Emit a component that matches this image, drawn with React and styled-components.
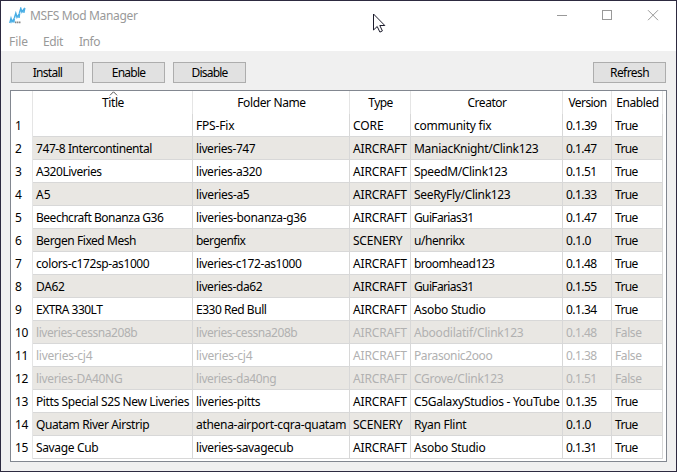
import React, { useLayoutEffect, useRef, useState } from 'react';
import styled, { createGlobalStyle } from 'styled-components';

const Global = createGlobalStyle`
  * { box-sizing: border-box; }
  body { margin: 0; background: #2d2a40; overflow: hidden; }
`;

const Desktop = styled.div`
  width: 677px;
  height: 472px;
  padding: 1px;
  background: #2d2a40;
`;
const Window = styled.main`
  position: relative;
  display: flex;
  flex-direction: column;
  width: 675px;
  height: 470px;
  background: #f0f0f0;
  color: #000;
  font: 12px/22px 'Noto Sans', 'Open Sans', sans-serif;
  white-space: nowrap;
`;
const TitleBar = styled.header`
  display: flex;
  height: 29px;
  background: #fff;
  color: #999;
`;
const AppIcon = styled.svg`
  width: 17px;
  height: 17px;
  margin: 6px 4px 0 8px;
`;
const WindowTitle = styled.h1`
  flex: 1;
  margin: 0;
  padding-top: 1px;
  font-size: 12px;
  line-height: 28px;
  font-weight: 400;
`;
const Controls = styled.svg`
  width: 138px;
  height: 29px;
`;
const MenuBar = styled.nav`
  display: flex;
  height: 21px;
  padding-left: 8px;
  background: #fff;
  color: #999;
  line-height: 23px;
`;
const MenuItem = styled.span`
  width: ${(p) => p.$width}px;
`;
const Toolbar = styled.div`
  display: flex;
  gap: 8px;
  height: 39px;
  padding: 11px 10px 0;
`;
const Button = styled.button`
  width: 73px;
  height: 21px;
  margin-left: ${(p) => (p.$end ? 'auto' : 0)};
  padding: 0;
  border: 1px solid #adadad;
  background: #e1e1e1;
  color: #000;
  font: inherit;
  line-height: 19px;
  text-align: center;
`;
const Label = styled.span`
  display: inline-block;
`;
const Table = styled.div`
  width: 657px;
  height: 372px;
  margin-left: 9px;
  border: 1px solid #828790;
  background: #fff;
`;
const Row = styled.div`
  display: grid;
  grid-template-columns: 22px 160px 157px 61px 152px 49px 51px;
  grid-template-rows: 23px;
  height: 23px;
  color: ${(p) => (p.$off ? '#b1b1b1' : '#000')};
`;
const HeadCell = styled.div`
  position: relative;
  padding-left: 1px;
  border-right: 1px solid #e5e5e5;
  text-align: center;
  line-height: 24px;
`;
const SortArrow = styled.svg`
  position: absolute;
  top: 0;
  left: 76px;
  width: 9px;
  height: 5px;
`;
const RowNumber = styled.div`
  padding-left: 4px;
  border-right: 1px solid #e5e5e5;
  color: #000;
  line-height: 24px;
  letter-spacing: -0.4px;
`;
const Cell = styled.div`
  padding-left: 3px;
  border-right: 1px solid #d8d8d8;
  border-bottom: 1px solid #d8d8d8;
  background: ${(p) => (p.$alt ? '#e9e7e3' : '#fff')};
  line-height: 24px;
`;
const Pointer = styled.svg`
  position: absolute;
  left: 372px;
  top: 12px;
  width: 13px;
  height: 21px;
`;

const labelWidths = {
  'MSFS Mod Manager': 107.5, File: 19, Edit: 20, Info: 21,
  Install: 29.5, Enable: 33.5, Disable: 36, Refresh: 39,
  Title: 22, 'Folder Name': 68.5, Type: 24.5, Creator: 39, Version: 38, Enabled: 42.5,
  '747-8 Intercontinental': 116, A320Liveries: 65.5, A5: 14.5,
  'Beechcraft Bonanza G36': 127.3, 'Bergen Fixed Mesh': 100,
  'colors-c172sp-as1000': 113.3, DA62: 28.5, 'EXTRA 330LT': 66.3,
  'liveries-cessna208b': 101.3, 'liveries-cj4': 56.3, 'liveries-DA40NG': 86.3,
  'Pitts Special S2S New Liveries': 153, 'Quatam River Airstrip': 113.3, 'Savage Cub': 62.3,
  'FPS-Fix': 38.3, 'liveries-747': 59.3, 'liveries-a320': 65.6, 'liveries-a5': 53.4,
  'liveries-bonanza-g36': 110.4, bergenfix: 49.3, 'liveries-c172-as1000': 105.4,
  'liveries-da62': 66.2, 'E330 Red Bull': 70.4, 'liveries-da40ng': 80.2,
  'liveries-pitts': 64.3, 'athena-airport-cqra-quatam': 150.2, 'liveries-savagecub': 97.2,
  CORE: 30.5, AIRCRAFT: 53.7, SCENERY: 49.3,
  'community fix': 77.4, 'ManiacKnight/Clink123': 124.4, 'SpeedM/Clink123': 93.3,
  'SeeRyFly/Clink123': 96.4, GuiFarias31: 59.5, 'u/henrikx': 50.4, broomhead123: 80.4,
  'Asobo Studio': 71.4, 'Aboodilatif/Clink123': 109.4, Parasonic2ooo: 78.3,
  'CGrove/Clink123': 89.4, 'C5GalaxyStudios - YouTube': 145.4, 'Ryan Flint': 52.4,
  '0.1.0': 25, True: 22.6, False: 26.6,
};
const versionWidth = 30.6;

/* Tracks a label so that it takes its nominal width whatever font is in use. */
function Text({ children }) {
  const ref = useRef(null);
  const [tracking, setTracking] = useState(0);
  const width = labelWidths[children] || (/^0\.1\.\d\d$/.test(children) ? versionWidth : 0);
  useLayoutEffect(() => {
    if (width) {
      const natural = ref.current.getBoundingClientRect().width;
      setTracking((width - natural) / children.length);
    }
  }, []);
  return <Label ref={ref} style={{ letterSpacing: tracking }}>{children}</Label>;
}

const heads = ['', 'Title', 'Folder Name', 'Type', 'Creator', 'Version', 'Enabled'];
const mods = [
  ['', 'FPS-Fix', 'CORE', 'community fix', '0.1.39', 'True'],
  ['747-8 Intercontinental', 'liveries-747', 'AIRCRAFT', 'ManiacKnight/Clink123', '0.1.47', 'True'],
  ['A320Liveries', 'liveries-a320', 'AIRCRAFT', 'SpeedM/Clink123', '0.1.51', 'True'],
  ['A5', 'liveries-a5', 'AIRCRAFT', 'SeeRyFly/Clink123', '0.1.33', 'True'],
  ['Beechcraft Bonanza G36', 'liveries-bonanza-g36', 'AIRCRAFT', 'GuiFarias31', '0.1.47', 'True'],
  ['Bergen Fixed Mesh', 'bergenfix', 'SCENERY', 'u/henrikx', '0.1.0', 'True'],
  ['colors-c172sp-as1000', 'liveries-c172-as1000', 'AIRCRAFT', 'broomhead123', '0.1.48', 'True'],
  ['DA62', 'liveries-da62', 'AIRCRAFT', 'GuiFarias31', '0.1.55', 'True'],
  ['EXTRA 330LT', 'E330 Red Bull', 'AIRCRAFT', 'Asobo Studio', '0.1.34', 'True'],
  ['liveries-cessna208b', 'liveries-cessna208b', 'AIRCRAFT', 'Aboodilatif/Clink123', '0.1.48', 'False'],
  ['liveries-cj4', 'liveries-cj4', 'AIRCRAFT', 'Parasonic2ooo', '0.1.38', 'False'],
  ['liveries-DA40NG', 'liveries-da40ng', 'AIRCRAFT', 'CGrove/Clink123', '0.1.51', 'False'],
  ['Pitts Special S2S New Liveries', 'liveries-pitts', 'AIRCRAFT', 'C5GalaxyStudios - YouTube', '0.1.35', 'True'],
  ['Quatam River Airstrip', 'athena-airport-cqra-quatam', 'SCENERY', 'Ryan Flint', '0.1.0', 'True'],
  ['Savage Cub', 'liveries-savagecub', 'AIRCRAFT', 'Asobo Studio', '0.1.31', 'True'],
];

export default function App() {
  return (
    <Desktop>
      <Global />
      <Window>
        <TitleBar>
          <AppIcon viewBox="0 0 17 17" fill="none" stroke="#49aee5" strokeWidth="1.5">
            <path d="M.8 16 2 11.5l1 3.3 2.3-3.3-.5 4.2" />
            <path d="M5.4 11 6.8 6.3l1.2 4 2.6-4-.6 4.7" />
            <path d="M10.4 6 11.8 1.5l1.1 3.5L15.8 1l-1 4.8" />
            <path d="M6 15.3h6" stroke="#888" strokeDasharray="1.4 .5" strokeWidth="1.8" />
          </AppIcon>
          <WindowTitle><Text>MSFS Mod Manager</Text></WindowTitle>
          <Controls viewBox="0 0 138 29" fill="none" stroke="#999">
            <path d="M19 14.5h10M64.5 9.5h9v9h-9z" shapeRendering="crispEdges" />
            <path d="m110 9.2 10 10m0-10-10 10" />
          </Controls>
        </TitleBar>
        <MenuBar>
          <MenuItem $width={34}><Text>File</Text></MenuItem>
          <MenuItem $width={36}><Text>Edit</Text></MenuItem>
          <MenuItem $width={30}><Text>Info</Text></MenuItem>
        </MenuBar>
        <Toolbar>
          <Button><Text>Install</Text></Button>
          <Button><Text>Enable</Text></Button>
          <Button><Text>Disable</Text></Button>
          <Button $end><Text>Refresh</Text></Button>
        </Toolbar>
        <Table>
          <Row>
            {heads.map((h) => (
              <HeadCell key={h}>
                {h === 'Title' && (
                  <SortArrow viewBox="0 0 9 5" fill="none" stroke="#555"><path d="m1 4.3 3.5-3.5L8 4.3" /></SortArrow>
                )}
                <Text>{h}</Text>
              </HeadCell>
            ))}
          </Row>
          {mods.map((m, i) => (
            <Row key={i} $off={m[5] === 'False'}>
              <RowNumber>{i + 1}</RowNumber>
              {m.map((value, c) => (
                <Cell key={c} $alt={i % 2 === 1}><Text>{value}</Text></Cell>
              ))}
            </Row>
          ))}
        </Table>
        <Pointer viewBox="0 0 13 21" fill="#fff" stroke="#1b1b2b">
          <path d="M.5 1v16l3.7-3.5 2.7 5.6 2.5-1.2-2.6-5.4h5z" />
        </Pointer>
      </Window>
    </Desktop>
  );
}
